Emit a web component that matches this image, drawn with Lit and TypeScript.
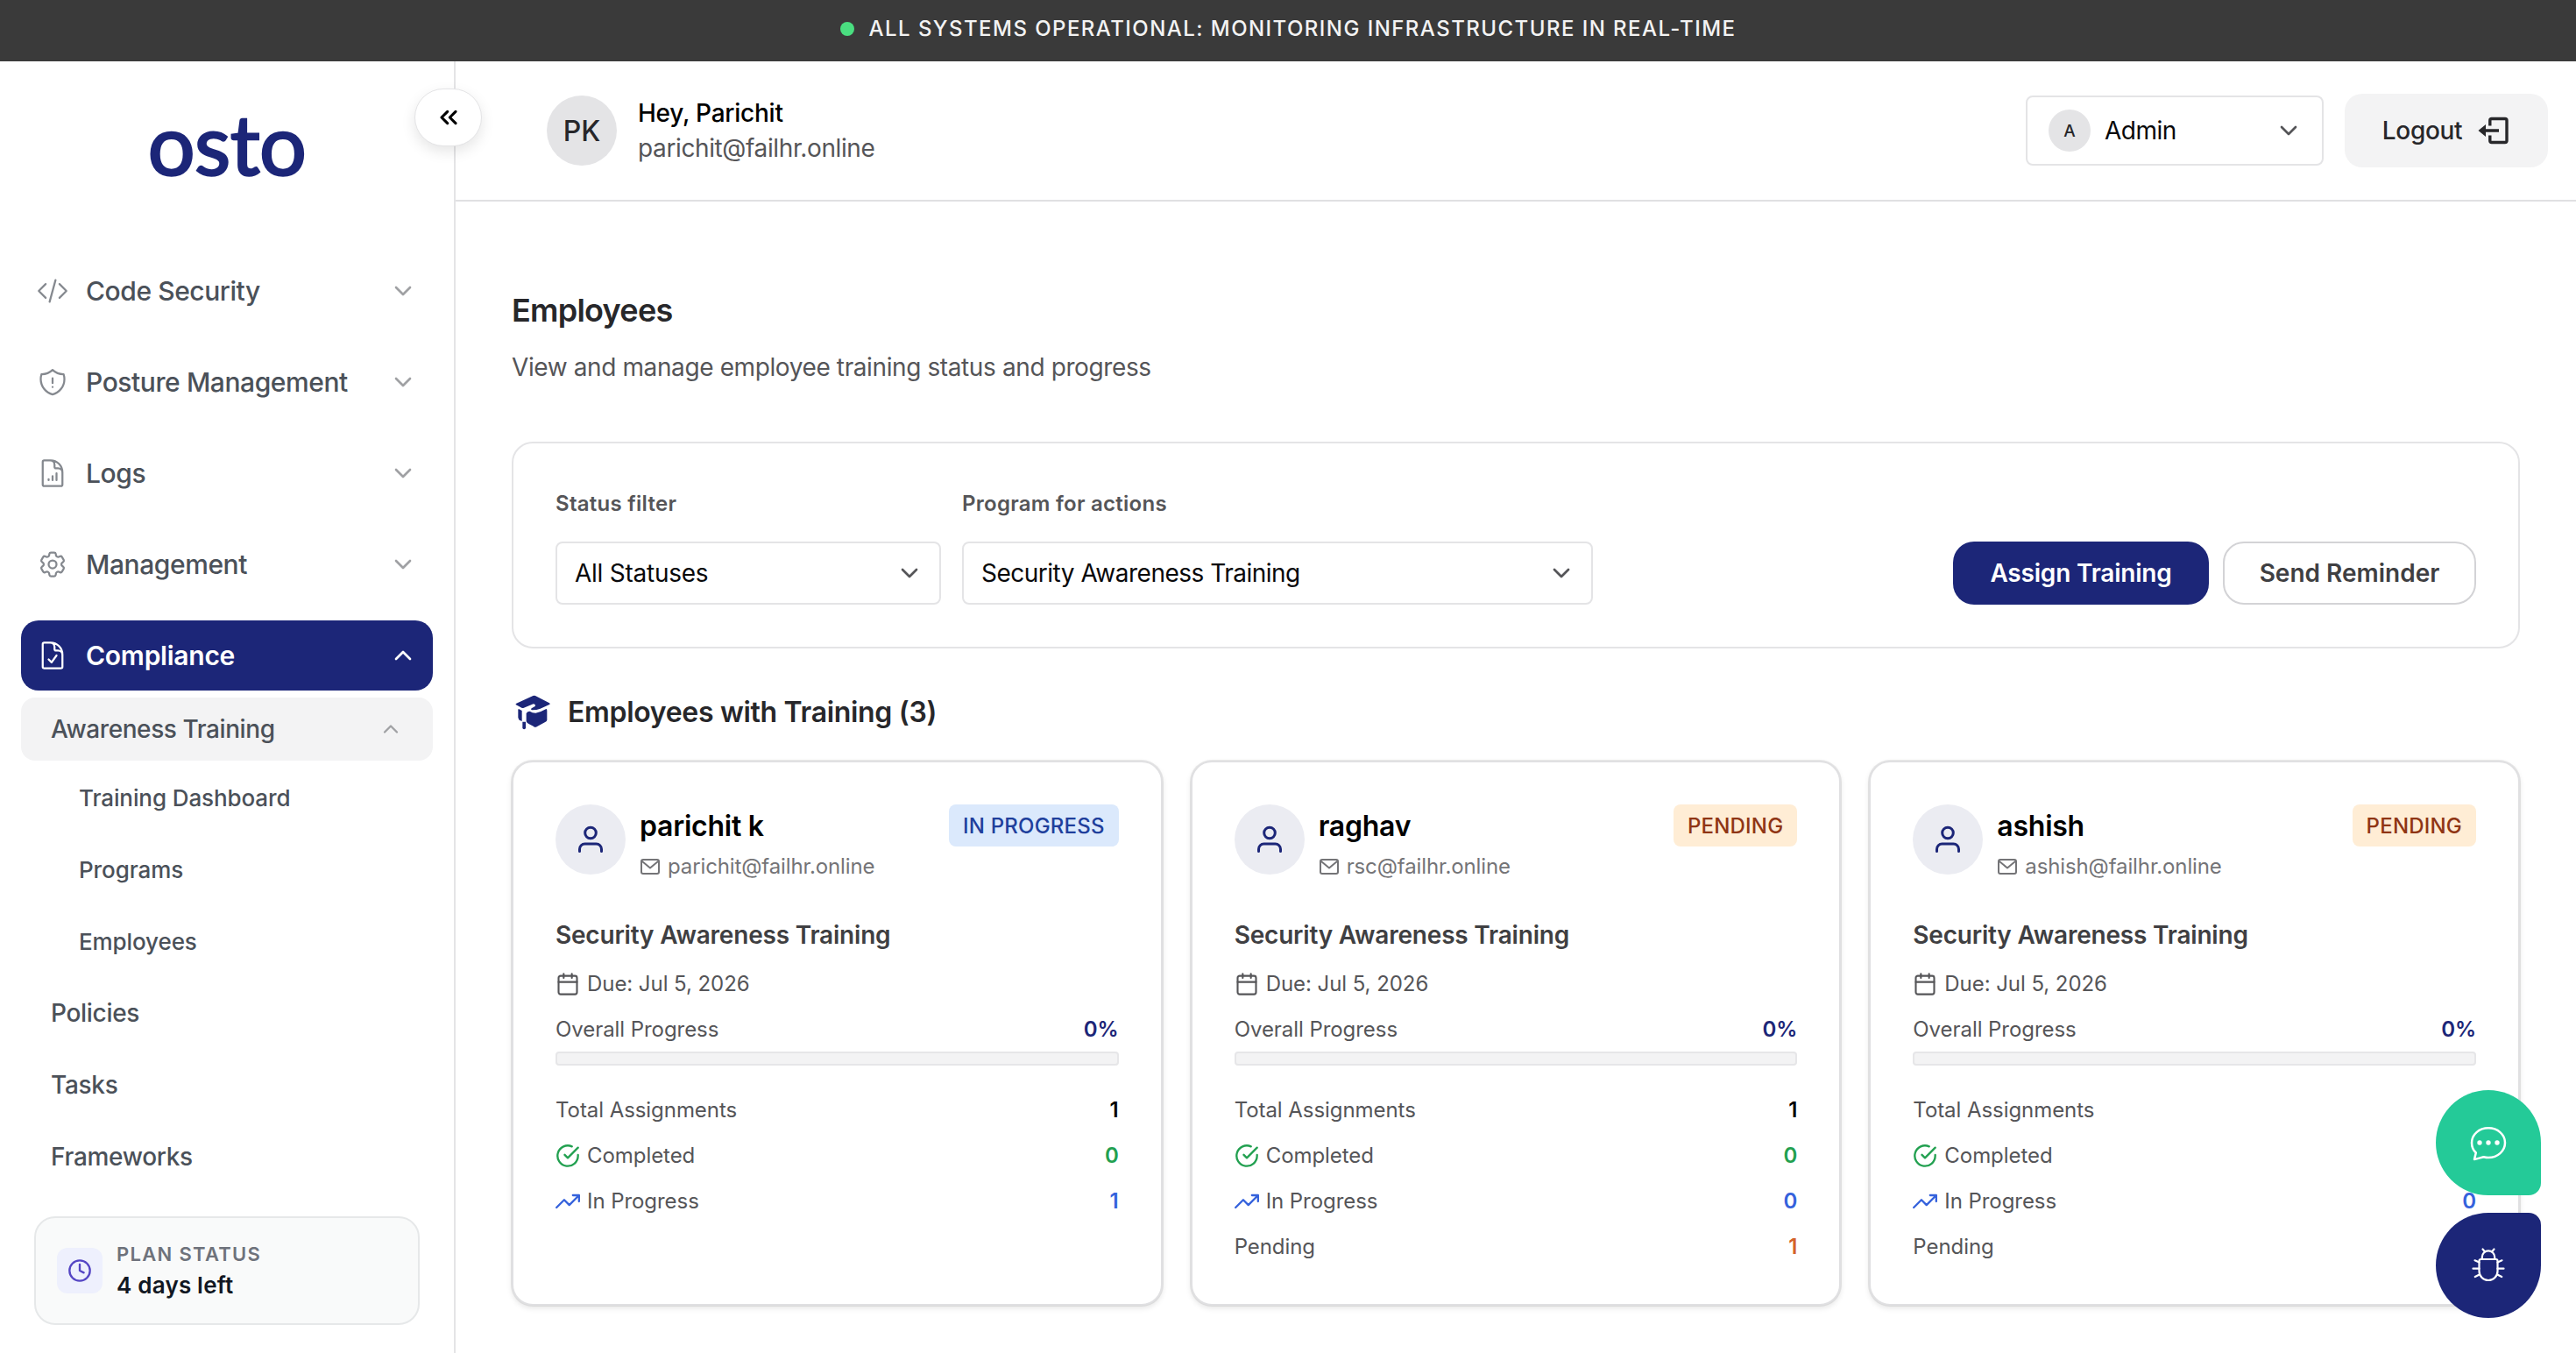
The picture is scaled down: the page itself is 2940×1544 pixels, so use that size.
import { LitElement, html, css, svg } from "lit";
import { customElement, property } from "lit/decorators.js";
import { classMap } from "lit/directives/class-map.js";

/* icons */

const ICONS = {
  code: svg`<path d="M17.25 6.75 22.5 12l-5.25 5.25m-10.5 0L1.5 12l5.25-5.25m7.5-3-4.5 16.5" />`,
  shield: svg`<path d="M12 9v3.75m0-10.036A11.959 11.959 0 0 1 3.598 6 11.99 11.99 0 0 0 3 9.75c0 5.592 3.824 10.29 9 11.622 5.176-1.332 9-6.03 9-11.622 0-1.31-.21-2.57-.598-3.75h-.152c-3.196 0-6.1-1.25-8.25-3.286Zm0 13.036h.008v.008H12v-.008Z" />`,
  chart: svg`<path d="M19.5 14.25v-2.625a3.375 3.375 0 0 0-3.375-3.375h-1.5A1.125 1.125 0 0 1 13.5 7.125v-1.5a3.375 3.375 0 0 0-3.375-3.375H8.25M9 16.5v.75m3-3v3M15 12v5.25m-4.5-15H5.625c-.621 0-1.125.504-1.125 1.125v17.25c0 .621.504 1.125 1.125 1.125h12.75c.621 0 1.125-.504 1.125-1.125V11.25a9 9 0 0 0-9-9Z" />`,
  cog: svg`<path d="M9.594 3.94c.09-.542.56-.94 1.11-.94h2.593c.55 0 1.02.398 1.11.94l.213 1.281c.063.374.313.686.645.87.074.04.147.083.22.127.325.196.72.257 1.075.124l1.217-.456a1.125 1.125 0 0 1 1.37.49l1.296 2.247a1.125 1.125 0 0 1-.26 1.431l-1.003.827c-.293.241-.438.613-.43.992a7.723 7.723 0 0 1 0 .255c-.008.378.137.75.43.991l1.004.827c.424.35.534.955.26 1.43l-1.298 2.247a1.125 1.125 0 0 1-1.369.491l-1.217-.456c-.355-.133-.75-.072-1.076.124a6.47 6.47 0 0 1-.22.128c-.331.183-.581.495-.644.869l-.213 1.281c-.09.543-.56.94-1.11.94h-2.594c-.55 0-1.019-.398-1.11-.94l-.213-1.281c-.062-.374-.312-.686-.644-.87a6.52 6.52 0 0 1-.22-.127c-.325-.196-.72-.257-1.076-.124l-1.217.456a1.125 1.125 0 0 1-1.369-.49l-1.297-2.247a1.125 1.125 0 0 1 .26-1.431l1.004-.827c.292-.24.437-.613.43-.991a6.932 6.932 0 0 1 0-.255c.007-.38-.138-.751-.43-.992l-1.004-.827a1.125 1.125 0 0 1-.26-1.43l1.297-2.247a1.125 1.125 0 0 1 1.37-.491l1.216.456c.356.133.751.072 1.076-.124.072-.044.146-.086.22-.128.332-.183.582-.495.644-.869l.214-1.28Z" /><path d="M15 12a3 3 0 1 1-6 0 3 3 0 0 1 6 0Z" />`,
  check: svg`<path d="M10.125 2.25h-4.5c-.621 0-1.125.504-1.125 1.125v17.25c0 .621.504 1.125 1.125 1.125h12.75c.621 0 1.125-.504 1.125-1.125v-9M10.125 2.25h.375a9 9 0 0 1 9 9v.375M10.125 2.25A3.375 3.375 0 0 1 13.5 5.625v1.5c0 .621.504 1.125 1.125 1.125h1.5a3.375 3.375 0 0 1 3.375 3.375M9 15l2.25 2.25L15 12" />`,
  down: svg`<path d="m6 9 6 6 6-6" />`,
  up: svg`<path d="m6 15 6-6 6 6" />`,
  collapse: svg`<path d="m11 17-5-5 5-5m7 10-5-5 5-5" />`,
  clock: svg`<circle cx="12" cy="12" r="10" /><path d="M12 6v6l4 2" />`,
  mail: svg`<rect x="2" y="4" width="20" height="16" rx="2" /><path d="m3 6 9 7.5L21 6" />`,
  calendar: svg`<path d="M8 2v4m8-4v4M3 10h18" /><rect x="3" y="4" width="18" height="18" rx="2" />`,
  done: svg`<path d="M22 11.08V12a10 10 0 1 1-5.93-9.14M22 4 12 14.01l-3-3" />`,
  trend: svg`<path d="m23 6-9.5 9.5-5-5L1 18M17 6h6v6" />`,
};

const icon = (name: keyof typeof ICONS, size: number, stroke = 2) => html`
  <svg
    width=${size}
    height=${size}
    viewBox="0 0 24 24"
    fill="none"
    stroke="currentColor"
    stroke-width=${stroke}
    stroke-linecap="round"
    stroke-linejoin="round"
  >
    ${ICONS[name]}
  </svg>
`;

const base = css`
  * {
    box-sizing: border-box;
  }
  svg {
    display: block;
    flex: none;
  }
`;

/* side-nav */

@customElement("side-nav")
export class SideNav extends LitElement {
  static styles = [
    base,
    css`
      :host {
        position: relative;
        display: flex;
        flex-direction: column;
        width: 520px;
        box-sizing: border-box;
        border-right: 2px solid #e4e4e6;
        color: #4b5159;
      }
      .logo {
        padding-top: 43px;
        margin-bottom: 79px;
        text-align: center;
        font-family: "Lato", sans-serif;
        font-size: 95px;
        line-height: 100px;
        letter-spacing: -0.5px;
        color: #1c2678;
        -webkit-text-stroke: 2.5px #1c2678;
      }
      .collapse {
        position: absolute;
        top: 31px;
        right: -32px;
        width: 77px;
        height: 66px;
        display: grid;
        place-items: center;
        border: 1px solid #e4e4e6;
        border-radius: 33px;
        background: #fff;
        color: #000;
        box-shadow: 0 6px 16px rgba(0, 0, 0, 0.1);
      }
      .menu {
        display: flex;
        flex-direction: column;
        gap: 24px;
        padding: 0 24px;
      }
      .item {
        display: flex;
        align-items: center;
        gap: 20px;
        height: 80px;
        padding: 0 18px;
        border-radius: 20px;
        font-size: 30px;
        font-weight: 500;
        letter-spacing: -0.42px;
      }
      .item .label {
        flex: 1;
      }
      .item svg {
        color: #85898f;
      }
      .item svg:last-child {
        color: #a0a1a4;
      }
      .item.active {
        background: #1c2678;
        color: #fff;
        font-weight: 600;
        letter-spacing: -0.25px;
      }
      .item.active svg {
        color: #fff;
      }
      .group {
        display: flex;
        align-items: center;
        justify-content: space-between;
        height: 72px;
        margin: 8px 24px 2px;
        padding: 0 34px;
        border-radius: 16px;
        background: #f3f3f4;
        font-size: 28px;
        font-weight: 500;
        letter-spacing: -0.42px;
      }
      .group svg {
        color: #a0a1a4;
      }
      .sub {
        height: 81.8px;
        line-height: 82px;
        padding-left: 58px;
        font-size: 28px;
        font-weight: 500;
        letter-spacing: -0.3px;
      }
      .sub.nested {
        padding-left: 90px;
        font-size: 26px;
        letter-spacing: -0.1px;
      }
      .plan {
        display: flex;
        align-items: center;
        gap: 16px;
        height: 124px;
        margin: auto 39px 32px 39px;
        padding: 0 24px;
        border: 2px solid #e6e8e9;
        border-radius: 24px;
        background: #f9fafa;
      }
      .plan-icon {
        display: grid;
        place-items: center;
        width: 52px;
        height: 52px;
        border-radius: 12px;
        background: #eef0fd;
        color: #5546c4;
      }
      .plan-text {
        padding-bottom: 3px;
        line-height: 36px;
      }
      .plan-title {
        font-size: 22px;
        font-weight: 600;
        letter-spacing: 1.3px;
        color: #6e727b;
      }
      .plan-value {
        font-size: 26px;
        font-weight: 600;
        letter-spacing: 0.2px;
        color: #111722;
      }
    `,
  ];

  items: { icon: keyof typeof ICONS; label: string; active?: boolean }[] = [
    { icon: "code", label: "Code Security" },
    { icon: "shield", label: "Posture Management" },
    { icon: "chart", label: "Logs" },
    { icon: "cog", label: "Management" },
    { icon: "check", label: "Compliance", active: true },
  ];

  render() {
    return html`
      <div class="logo">osto</div>
      <div class="collapse">${icon("collapse", 32, 2.3)}</div>
      <nav class="menu">
        ${this.items.map(
          (item) => html`
            <div class=${classMap({ item: true, active: !!item.active })}>
              ${icon(item.icon, 36, 1.5)}
              <span class="label">${item.label}</span>
              ${icon(item.active ? "up" : "down", 32)}
            </div>
          `
        )}
      </nav>
      <div class="group">Awareness Training ${icon("up", 28)}</div>
      ${["Training Dashboard", "Programs", "Employees"].map(
        (label) => html`<div class="sub nested">${label}</div>`
      )}
      ${["Policies", "Tasks", "Frameworks"].map(
        (label) => html`<div class="sub">${label}</div>`
      )}
      <div class="plan">
        <div class="plan-icon">${icon("clock", 28)}</div>
        <div class="plan-text">
          <div class="plan-title">PLAN STATUS</div>
          <div class="plan-value">4 days left</div>
        </div>
      </div>
    `;
  }
}

/* top-header */

@customElement("top-header")
export class TopHeader extends LitElement {
  static styles = [
    base,
    css`
      :host {
        display: flex;
        align-items: center;
        gap: 24px;
        height: 160px;
        box-sizing: border-box;
        padding: 0 32px 0 104px;
        border-bottom: 2px solid #e0e0e2;
        font-size: 28px;
      }
      .avatar {
        display: grid;
        place-items: center;
        width: 80px;
        height: 80px;
        border-radius: 50%;
        background: #e4e4e6;
        color: #27272a;
        font-size: 32px;
        font-weight: 500;
      }
      .who {
        flex: 1;
        line-height: 40px;
      }
      .name {
        font-weight: 500;
        letter-spacing: -0.25px;
        color: #000;
      }
      .email {
        color: #555558;
        letter-spacing: -0.38px;
      }
      .role {
        display: flex;
        align-items: center;
        gap: 16px;
        width: 340px;
        height: 80px;
        padding: 0 22px 0 24px;
        border: 2px solid #e4e4e6;
        border-radius: 8px;
        letter-spacing: -0.5px;
      }
      .role .label {
        flex: 1;
      }
      .role svg {
        color: #555558;
      }
      .initial {
        display: grid;
        place-items: center;
        width: 48px;
        height: 48px;
        border-radius: 50%;
        background: #e4e4e6;
        color: #27272a;
        font-size: 19px;
        font-weight: 500;
        letter-spacing: 0;
      }
      .logout {
        display: flex;
        align-items: center;
        justify-content: center;
        gap: 15px;
        width: 232px;
        height: 84px;
        border-radius: 20px;
        background: #f3f3f4;
        color: #27272a;
        font-weight: 500;
        letter-spacing: -0.35px;
      }
    `,
  ];

  render() {
    return html`
      <div class="avatar">PK</div>
      <div class="who">
        <div class="name">Hey, Parichit</div>
        <div class="email">parichit@failhr.online</div>
      </div>
      <div class="role">
        <span class="initial">A</span>
        <span class="label">Admin</span>
        ${icon("down", 32)}
      </div>
      <div class="logout">
        Logout
        <svg width="40" height="40" viewBox="0 0 40 40">
          <path
            fill="none"
            stroke="currentColor"
            stroke-width="3.4"
            d="M16.8 14.5V8.500q0-2 2-2H34q2 0 2 2v23q0 2-2 2H18.800q-2 0-2-2v-6M11 20h16"
          />
          <path fill="currentColor" d="m3.500 20 8.500-7v14z" />
        </svg>
      </div>
    `;
  }
}

/* filter-bar */

@customElement("filter-bar")
export class FilterBar extends LitElement {
  static styles = [
    base,
    css`
      :host {
        display: flex;
        align-items: flex-end;
        gap: 24px;
        box-sizing: border-box;
        height: 236px;
        padding: 48px;
        border: 2px solid #e4e4e6;
        border-radius: 24px;
      }
      .field {
        display: flex;
        flex-direction: column;
        gap: 23px;
        width: 440px;
      }
      .field.wide {
        width: 720px;
      }
      .label {
        font-size: 24px;
        line-height: 40px;
        font-weight: 600;
        letter-spacing: 0.27px;
        color: #555558;
      }
      .select {
        display: flex;
        align-items: center;
        justify-content: space-between;
        height: 72px;
        padding: 0 18px 0 20px;
        border: 2px solid #e4e4e6;
        border-radius: 8px;
        font-size: 28px;
        letter-spacing: -0.25px;
        color: #09090b;
      }
      .wide .select {
        letter-spacing: -0.5px;
      }
      .select svg {
        color: #555558;
      }
      .actions {
        display: flex;
        gap: 16px;
        margin-left: auto;
      }
      .button {
        display: grid;
        place-items: center;
        width: 292px;
        height: 72px;
        border-radius: 24px;
        background: #1c2678;
        color: #fff;
        font-size: 28px;
        font-weight: 600;
        letter-spacing: -0.2px;
      }
      .button.outline {
        width: 289px;
        border: 2px solid #d3d3d6;
        background: #fff;
        color: #3f3f42;
        letter-spacing: 0;
      }
    `,
  ];

  render() {
    return html`
      <div class="field">
        <span class="label">Status filter</span>
        <div class="select">All Statuses ${icon("down", 32)}</div>
      </div>
      <div class="field wide">
        <span class="label">Program for actions</span>
        <div class="select">Security Awareness Training ${icon("down", 32)}</div>
      </div>
      <div class="actions">
        <div class="button">Assign Training</div>
        <div class="button outline">Send Reminder</div>
      </div>
    `;
  }
}

/* employee-card */

interface Employee {
  name: string;
  email: string;
  status: "IN PROGRESS" | "PENDING";
  inProgress: number;
  pending: number;
}

@customElement("employee-card")
export class EmployeeCard extends LitElement {
  static styles = [
    base,
    css`
      :host {
        display: block;
        box-sizing: border-box;
        height: 622px;
        padding: 48px;
        border: 2px solid #e0e0e2;
        border-radius: 24px;
        background: #fff;
        box-shadow: 0 0 0 1px rgba(0, 0, 0, 0.08), 0 3px 6px rgba(0, 0, 0, 0.1);
        font-size: 24px;
        line-height: 36px;
        letter-spacing: -0.06px;
        color: #555558;
      }
      .head {
        display: flex;
        align-items: flex-start;
        gap: 16px;
      }
      .avatar {
        display: grid;
        place-items: center;
        width: 80px;
        height: 80px;
        border-radius: 50%;
        background: #ebecf2;
        color: #1c2678;
      }
      .who {
        flex: 1;
      }
      .name {
        font-size: 32px;
        line-height: 49px;
        font-weight: 600;
        letter-spacing: -0.25px;
        color: #000;
      }
      .email {
        display: flex;
        align-items: center;
        gap: 8px;
        line-height: 40px;
        margin-top: 2px;
        letter-spacing: -0.12px;
        color: #747477;
      }
      .badge {
        height: 48px;
        padding: 1px 16px 0;
        border-radius: 8px;
        background: #ffedd5;
        color: #8f3514;
        line-height: 48px;
        font-weight: 500;
        letter-spacing: 0.2px;
      }
      .badge.progress {
        background: #dbe9fc;
        color: #203f9c;
      }
      .program {
        margin-top: 38px;
        font-size: 28px;
        line-height: 40px;
        font-weight: 600;
        letter-spacing: -0.2px;
        color: #3f3f42;
      }
      .due {
        display: flex;
        align-items: center;
        gap: 8px;
        margin: 18px 0 16px;
      }
      .row {
        display: flex;
        align-items: center;
        gap: 8px;
      }
      .row b {
        margin-left: auto;
        font-weight: 600;
        color: #000;
      }
      .row .navy {
        color: #1c2678;
      }
      .bar {
        height: 16px;
        margin: 7px 0 33px;
        border: 2px solid #e6e6e8;
        border-radius: 4px;
        background: #f3f3f4;
      }
      .stats {
        display: flex;
        flex-direction: column;
        gap: 16px;
      }
      .row .green {
        color: #22a050;
      }
      .row .blue {
        color: #3562dc;
      }
      .row .orange {
        color: #d4622a;
      }
    `,
  ];

  @property({ attribute: false }) employee!: Employee;

  render() {
    const { name, email, status, inProgress, pending } = this.employee;
    return html`
      <div class="head">
        <div class="avatar">
          <svg
            width="40"
            height="40"
            viewBox="0 0 40 40"
            fill="none"
            stroke="currentColor"
            stroke-width="3"
            stroke-linecap="round"
          >
            <circle cx="20" cy="12.500" r="6.300" />
            <path d="M7.500 33.500V31a6 6 0 0 1 6-6h13a6 6 0 0 1 6 6v2.500" />
          </svg>
        </div>
        <div class="who">
          <div class="name">${name}</div>
          <div class="email">${icon("mail", 24)} ${email}</div>
        </div>
        <div class=${classMap({ badge: true, progress: status === "IN PROGRESS" })}>
          ${status}
        </div>
      </div>
      <div class="program">Security Awareness Training</div>
      <div class="due">${icon("calendar", 28, 1.8)} Due: Jul 5, 2026</div>
      <div class="row">Overall Progress <b class="navy">0%</b></div>
      <div class="bar"></div>
      <div class="stats">
        <div class="row">Total Assignments <b>1</b></div>
        <div class="row">
          <span class="green">${icon("done", 28)}</span> Completed
          <b class="green">0</b>
        </div>
        <div class="row">
          <span class="blue">${icon("trend", 28)}</span> In Progress
          <b class="blue">${inProgress}</b>
        </div>
        ${pending
          ? html`<div class="row">Pending <b class="orange">${pending}</b></div>`
          : ""}
      </div>
    `;
  }
}

/* app-root */

@customElement("app-root")
export class AppRoot extends LitElement {
  static styles = [
    base,
    css`
      :host {
        position: relative;
        display: flex;
        flex-direction: column;
        width: 2940px;
        height: 1544px;
        overflow: hidden;
        background: #fff;
        font-family: "Inter", sans-serif;
        color: #09090b;
      }
      .banner {
        display: flex;
        align-items: center;
        justify-content: center;
        gap: 17px;
        height: 70px;
        padding-bottom: 5px;
        background: #3a3a3a;
        color: #f3f3f3;
        font-size: 24px;
        font-weight: 500;
        letter-spacing: 1.45px;
      }
      .dot {
        width: 16px;
        height: 16px;
        border-radius: 50%;
        background: #4ade80;
      }
      .shell {
        display: grid;
        grid-template-columns: 520px 1fr;
        flex: 1;
      }
      .page {
        padding: 100px 64px 0;
      }
      .title {
        margin: 0;
        font-size: 36px;
        line-height: 48px;
        font-weight: 600;
        letter-spacing: -0.75px;
        color: #27272a;
      }
      .subtitle {
        margin: 21px 0 65px;
        font-size: 28px;
        line-height: 40px;
        letter-spacing: -0.39px;
        color: #555558;
      }
      .section {
        display: flex;
        align-items: center;
        gap: 20px;
        margin: 49px 0 31px;
        padding-left: 4px;
        font-size: 32px;
        line-height: 48px;
        font-weight: 600;
        letter-spacing: -0.32px;
        color: #27272a;
      }
      .section svg {
        color: #1c2678;
      }
      .cards {
        display: grid;
        grid-template-columns: repeat(3, 1fr);
        gap: 32px;
      }
      .floating {
        position: absolute;
        right: 40px;
        bottom: 40px;
        display: flex;
        flex-direction: column;
        gap: 20px;
      }
      .fab {
        width: 120px;
        height: 120px;
        color: #fff;
      }
      .fab.chat {
        border-radius: 60px 60px 14px 60px;
        background: #24ca98;
      }
      .fab.bug {
        border-radius: 60px 14px 60px 60px;
        background: #1c2678;
      }
    `,
  ];

  employees: Employee[] = [
    {
      name: "parichit k",
      email: "parichit@failhr.online",
      status: "IN PROGRESS",
      inProgress: 1,
      pending: 0,
    },
    {
      name: "raghav",
      email: "rsc@failhr.online",
      status: "PENDING",
      inProgress: 0,
      pending: 1,
    },
    {
      name: "ashish",
      email: "ashish@failhr.online",
      status: "PENDING",
      inProgress: 0,
      pending: 1,
    },
  ];

  render() {
    return html`
      <div class="banner">
        <span class="dot"></span>
        ALL SYSTEMS OPERATIONAL: MONITORING INFRASTRUCTURE IN REAL-TIME
      </div>
      <div class="shell">
        <side-nav></side-nav>
        <div>
          <top-header></top-header>
          <main class="page">
            <h1 class="title">Employees</h1>
            <p class="subtitle">
              View and manage employee training status and progress
            </p>
            <filter-bar></filter-bar>
            <div class="section">
              <svg width="40" height="40" viewBox="54 36 120 120" fill="currentColor">
                <path
                  d="M57 70q-3-3 1-5l57-26q4-2 8 0l48 25q4 3 0 5l-31 14q-12 5-28 5-6-1-2-6l12-7q3-8-6-8L82 81q-3 1-6-1z"
                />
                <path
                  d="M92 99q4-7 12-7 8 6 20 6 18-3 36-14 3 0 3 6v32q-1 4-5 6l-30 17q-6 4-12-2l-16-8q-8-4-8-9z"
                />
                <path d="m66 84 11 6v36l-9-4q-4-4-4-10V86z" />
                <path d="M79 128h11v20q0 6-5.500 6t-5.500-6z" />
              </svg>
              Employees with Training (${this.employees.length})
            </div>
            <div class="cards">
              ${this.employees.map(
                (e) => html`<employee-card .employee=${e}></employee-card>`
              )}
            </div>
          </main>
        </div>
      </div>
      <div class="floating">
        <div class="fab chat">
          <svg
            width="120"
            height="120"
            viewBox="0 0 120 120"
            fill="none"
            stroke="currentColor"
            stroke-width="2.500"
            stroke-linejoin="round"
          >
            <path
              d="m44 79 1.800-7.500C42.500 68.500 41 64.500 41 60c0-9.500 8.500-16.700 19-16.700S79 50.500 79 60s-8.500 17-19 17c-2 0-4-.4-5.500-.8C51 77 48 78.500 44 79Z"
            />
            <g fill="currentColor" stroke="none">
              <circle cx="50" cy="60" r="2.700" />
              <circle cx="60" cy="60" r="2.700" />
              <circle cx="70" cy="60" r="2.700" />
            </g>
          </svg>
        </div>
        <div class="fab bug">
          <svg
            width="120"
            height="120"
            viewBox="0 0 120 120"
            fill="none"
            stroke="currentColor"
            stroke-width="2.200"
            stroke-linecap="round"
            stroke-linejoin="round"
          >
            <path d="M52.800 53v-2.500a7.200 7.200 0 0 1 14.400 0V53" />
            <path d="M51.500 53h17q2 0 2 2v11.500a10.500 10.500 0 0 1-21 0V55q0-2 2-2Z" />
            <path
              d="m53.500 41.500 2.200 2.500m10.800-2.500L64.300 44M49.500 56.500l-5-2.200m26 2.200 5-2.200M49.500 63.700h-7m28 0h7M49.800 70.500l-5 2.500m25.400-2.500 5 2.500"
            />
          </svg>
        </div>
      </div>
    `;
  }
}
